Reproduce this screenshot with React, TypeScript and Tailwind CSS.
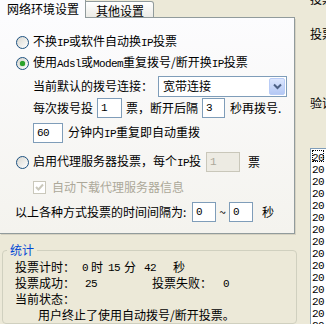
import React from 'react'

const L = ({ children }: { children: React.ReactNode }) => (
    <span className="font-['Liberation_Mono',monospace] text-[11px] tracking-[-0.6px]">{children}</span>
)

const Radio = ({ checked }: { checked?: boolean }) => (
    <span className="w-[13px] h-[13px] shrink-0 rounded-full border border-[#1C5180] bg-gradient-to-br from-[#D8D7D0] to-white flex items-center justify-center">
        {checked && <span className="w-[5px] h-[5px] rounded-full bg-[#2BA32B] shadow-[0_0_1px_#1F8F1F]" />}
    </span>
)

const Box = ({ value, w, disabled }: { value: string; w: string; disabled?: boolean }) => (
    <span className={`${w} h-[20px] shrink-0 border ${disabled ? 'bg-[#EDEBE3] text-[#ACA899] border-[#C9C7BA]' : 'bg-white border-[#7F9DB9]'} pl-[3px] flex items-center`}>
        <L>{value}</L>
    </span>
)

const App = () => {
    const rows = Array.from({ length: 15 })

    return (
        <div className="w-[326px] h-[324px] overflow-hidden bg-[#ECE9D8] flex text-[12px] leading-[16px] text-black font-['Noto_Sans_CJK_SC',sans-serif]">
            <div className="w-[298px] shrink-0 flex flex-col">
                {/* tabs */}
                <div className="h-[18px] flex items-end">
                    <div className="w-[86px] h-[18px] bg-[#FCFCFE] border-r border-[#919B9C] pl-[7px] pt-[1px]">网络环境设置</div>
                    <div className="w-[68px] h-[17px] border border-[#919B9C] border-l-0 rounded-tr-[3px] bg-gradient-to-b from-white to-[#ECEBE6] pl-[10px] pt-[1px]">其他设置</div>
                    <div className="w-[141px] h-full border-b border-[#919B9C]" />
                </div>

                {/* panel */}
                <div className="w-[295px] h-[218px] border-r border-b border-[#919B9C] bg-gradient-to-b from-[#FCFCFE] to-[#F4F3EE] shadow-[1px_1px_0_#D6D2C2] flex flex-col">
                    <div className="mt-[14px] h-[20px] flex items-center pl-[16px] gap-[4px] whitespace-nowrap">
                        <Radio />
                        <span>不换<L>IP</L>或软件自动换<L>IP</L>投票</span>
                    </div>
                    <div className="mt-[1px] h-[20px] flex items-center pl-[16px] gap-[4px] whitespace-nowrap">
                        <Radio checked />
                        <span>使用<L>Adsl</L>或<L>Modem</L>重复拨号/断开换<L>IP</L>投票</span>
                    </div>
                    <div className="mt-[3px] h-[20px] flex items-center pl-[33px] whitespace-nowrap">
                        <span className="w-[125px]">当前默认的拨号连接：</span>
                        <div className="w-[129px] h-[21px] border border-[#7F9DB9] bg-white flex items-center justify-between">
                            <span className="pl-[4px]">宽带连接</span>
                            <span className="w-[16px] h-[17px] mr-[1px] rounded-[2px] border border-[#B9CCF6] bg-gradient-to-b from-[#DCE6FD] to-[#B4C8F4] flex items-center justify-center">
                                <svg width="9" height="7" viewBox="0 0 9 7">
                                    <path d="M1 1.5 L4.5 5 L8 1.5" stroke="#4D6185" strokeWidth="2" fill="none" />
                                </svg>
                            </span>
                        </div>
                    </div>
                    <div className="mt-[2px] h-[20px] flex items-center pl-[33px] whitespace-nowrap">
                        <span className="w-[64px]">每次拨号投</span>
                        <Box value="1" w="w-[25px]" />
                        <span className="w-[80px] pl-[4px]">票，断开后隔</span>
                        <Box value="3" w="w-[23px]" />
                        <span className="pl-[5px]">秒再拨号.</span>
                    </div>
                    <div className="mt-[5px] h-[20px] flex items-center pl-[33px] whitespace-nowrap">
                        <Box value="60" w="w-[30px]" />
                        <span className="pl-[5px]">分钟内<L>IP</L>重复即自动重拨</span>
                    </div>
                    <div className="mt-[9px] h-[20px] flex items-center pl-[16px] whitespace-nowrap">
                        <Radio />
                        <span className="w-[177px] pl-[4px]">启用代理服务器投票，每个<L>IP</L>投</span>
                        <Box value="1" w="w-[34px]" disabled />
                        <span className="pl-[8px]">票</span>
                    </div>
                    <div className="mt-[5px] h-[20px] flex items-center pl-[33px] gap-[6px] whitespace-nowrap">
                        <span className="w-[13px] h-[13px] border border-[#CAC8BB] bg-white flex items-center justify-center">
                            <svg width="9" height="9" viewBox="0 0 9 9">
                                <path d="M1 4 L3.5 6.5 L8 1.5" stroke="#CAC8BB" strokeWidth="2" fill="none" />
                            </svg>
                        </span>
                        <span className="text-[#ACA899]">自动下载代理服务器信息</span>
                    </div>
                    <div className="mt-[5px] h-[20px] flex items-center pl-[15px] whitespace-nowrap">
                        <span className="w-[177px]">以上各种方式投票的时间间隔为:</span>
                        <Box value="0" w="w-[24px]" />
                        <span className="w-[13px] text-center">~</span>
                        <Box value="0" w="w-[24px]" />
                        <span className="pl-[9px]">秒</span>
                    </div>
                </div>

                {/* stats */}
                <fieldset className="mt-[8px] ml-[2px] w-[295px] border border-[#D0D0BF] rounded-[4px] pl-[12px]">
                    <legend className="ml-[-8px] px-[3px] text-[#0046D5]">统计</legend>
                    <div className="mt-[1px] h-[16px] flex items-center whitespace-nowrap">
                        <span className="w-[67px]">投票计时：</span>
                        <span className="w-[9px]"><L>0</L></span>
                        <span className="w-[17px]">时</span>
                        <span className="w-[16px]"><L>15</L></span>
                        <span className="w-[20px]">分</span>
                        <span className="w-[29px]"><L>42</L></span>
                        <span>秒</span>
                    </div>
                    <div className="h-[16px] flex items-center whitespace-nowrap">
                        <span className="w-[70px]">投票成功：</span>
                        <span className="w-[67px]"><L>25</L></span>
                        <span className="w-[71px]">投票失败：</span>
                        <span><L>0</L></span>
                    </div>
                    <div className="h-[16px] flex items-center">当前状态：</div>
                    <div className="h-[16px] flex items-center pl-[23px] whitespace-nowrap">用户终止了使用自动拨号/断开投票。</div>
                </fieldset>
            </div>

            {/* right column */}
            <div className="flex-1 flex flex-col pl-[12px] whitespace-nowrap">
                <div className="mt-[-9px] h-[16px]">投票</div>
                <div className="mt-[19px] h-[16px]">投票</div>
                <div className="mt-[53px] h-[16px]">验证</div>
                <div className="mt-[37px] w-[40px] flex-1 border border-[#7F9DB9] bg-white pl-[1px] pt-[1px]">
                    {rows.map((_, i) => (
                        <div key={i} className={`h-[12px] w-fit leading-[12px] ${i === 0 ? 'outline-1 outline-dotted outline-black -outline-offset-1' : ''}`}>
                            <L>20</L>
                        </div>
                    ))}
                </div>
            </div>
        </div>
    )
}

export default App
